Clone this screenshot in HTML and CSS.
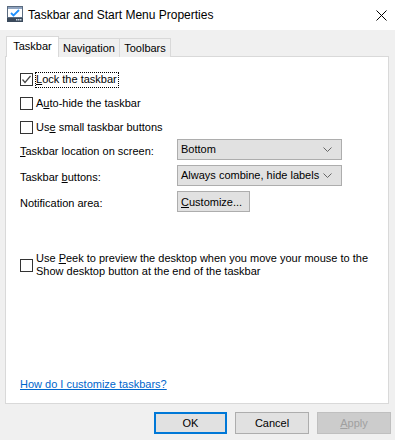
FILE: index.html
```html
<!DOCTYPE html>
<html lang="en">
<head>
    <meta charset="UTF-8">
    <title>Taskbar and Start Menu Properties</title>
    <link rel="stylesheet" href="styles.css">
</head>
<body>

    <div class="window">
        <div class="titlebar">
            <svg class="app-icon" width="16" height="16" viewBox="0 0 16 16">
                <rect x="0.5" y="0.5" width="15" height="11" fill="#ffffff" stroke="#5a6b80"/>
                <rect x="1" y="1" width="14" height="2" fill="#8fa3bf"/>
                <path d="M4 7 L6.5 9.5 L12 4" fill="none" stroke="#1e90ff" stroke-width="1.8"/>
                <rect x="0" y="12" width="16" height="4" fill="#3b4a5c"/>
                <rect x="9" y="13" width="1.5" height="1.5" fill="#c9d3de"/>
                <rect x="11" y="13" width="1.5" height="1.5" fill="#c9d3de"/>
                <rect x="13" y="13" width="1.5" height="1.5" fill="#c9d3de"/>
            </svg>
            <span class="title">Taskbar and Start Menu Properties</span>
            <svg class="close" width="11" height="11" viewBox="0 0 11 11">
                <path d="M0.5 0.5 L10.5 10.5 M10.5 0.5 L0.5 10.5" stroke="#000" stroke-width="1"/>
            </svg>
        </div>

        <div class="body">
            <div class="tabs">
                <div class="tab active">Taskbar</div>
                <div class="tab nav">Navigation</div>
                <div class="tab tools">Toolbars</div>
            </div>

            <div class="panel">
                <div class="checks">
                    <label class="check">
                        <span class="box">
                            <svg width="11" height="11" viewBox="0 0 11 11"><path d="M1.5 5.5 L4 8.5 L9.5 2" fill="none" stroke="#444" stroke-width="1.2"/></svg>
                        </span>
                        <span class="focus"><u>L</u>ock the taskbar</span>
                    </label>
                    <label class="check">
                        <span class="box"></span>
                        <span>A<u>u</u>to-hide the taskbar</span>
                    </label>
                    <label class="check">
                        <span class="box"></span>
                        <span>Us<u>e</u> small taskbar buttons</span>
                    </label>
                </div>

                <div class="settings">
                    <span class="label"><u>T</u>askbar location on screen:</span>
                    <div class="combo">
                        <span>Bottom</span>
                        <svg width="9" height="5" viewBox="0 0 9 5"><path d="M0.5 0.5 L4.5 4.5 L8.5 0.5" fill="none" stroke="#666"/></svg>
                    </div>

                    <span class="label">Taskbar <u>b</u>uttons:</span>
                    <div class="combo">
                        <span>Always combine, hide labels</span>
                        <svg width="9" height="5" viewBox="0 0 9 5"><path d="M0.5 0.5 L4.5 4.5 L8.5 0.5" fill="none" stroke="#666"/></svg>
                    </div>

                    <span class="label">Notification area:</span>
                    <div><button class="btn small"><u>C</u>ustomize...</button></div>
                </div>

                <label class="check peek">
                    <span class="box"></span>
                    <span>Use <u>P</u>eek to preview the desktop when you move your mouse to the Show desktop button at the end of the taskbar</span>
                </label>

                <a href="#" class="help">How do I customize taskbars?</a>
            </div>

            <div class="actions">
                <button class="btn default">OK</button>
                <button class="btn">Cancel</button>
                <button class="btn disabled"><u>A</u>pply</button>
            </div>
        </div>
    </div>

</body>
</html>
```

FILE: styles.css
```css
* {
    box-sizing: border-box;
}

body {
    margin: 0;
    padding: 0;
    font-family: 'Liberation Sans', Arial, sans-serif;
    font-size: 11px;
    line-height: 13px;
    color: #000;
    background: #f0f0f0;
}

.window {
    width: 395px;
    height: 440px;
    display: flex;
    flex-direction: column;
    overflow: hidden;
}

.titlebar {
    height: 30px;
    background: #fff;
    display: flex;
    align-items: center;
    padding-left: 7px;
    padding-right: 8px;
    flex-shrink: 0;
}

.app-icon {
    margin-top: -2px;
}

.title {
    margin-left: 5px;
    font-size: 12px;
    flex: 1;
}

.body {
    flex: 1;
    padding: 6px 6px 0 5px;
    display: flex;
    flex-direction: column;
}

.tabs {
    display: flex;
    align-items: flex-end;
    height: 21px;
    margin-left: 1px;
    margin-bottom: -1px;
    position: relative;
    z-index: 1;
}

.tab {
    height: 19px;
    border: 1px solid #d9d9d9;
    border-bottom: none;
    background: #f0f0f0;
    display: flex;
    align-items: center;
    justify-content: center;
    padding-top: 1px;
}

.tab.active {
    width: 53px;
    height: 21px;
    background: #fff;
    align-items: flex-start;
    padding-top: 3px;
}

.tab.nav {
    width: 61px;
    border-left: none;
}

.tab.tools {
    width: 51px;
    border-left: none;
}

.panel {
    height: 348px;
    background: #fff;
    border: 1px solid #d9d9d9;
    padding: 15px 14px 0 14px;
    display: flex;
    flex-direction: column;
    flex-shrink: 0;
}

.checks {
    display: flex;
    flex-direction: column;
    gap: 9px;
}

.check {
    display: flex;
    align-items: center;
    gap: 3px;
    height: 15px;
}

.box {
    width: 13px;
    height: 13px;
    border: 1px solid #333;
    background: #fff;
    flex-shrink: 0;
    display: flex;
}

.focus {
    outline: 1px dotted #000;
    padding: 0 1px 1px 0;
}

.settings {
    margin-top: 4px;
    display: grid;
    grid-template-columns: 157px 165px;
    row-gap: 5px;
    align-items: center;
}

.label {
    padding-top: 3px;
}

.combo {
    height: 21px;
    border: 1px solid #adadad;
    background: #e1e1e1;
    display: flex;
    align-items: center;
    justify-content: space-between;
    padding: 0 9px 0 3px;
    white-space: nowrap;
}

.btn {
    font-family: inherit;
    font-size: 11px;
    color: #000;
    height: 22px;
    width: 74px;
    border: 1px solid #adadad;
    background: #e1e1e1;
    padding: 0;
    margin: 0;
}

.btn.small {
    width: 73px;
    height: 21px;
    text-align: left;
    padding-left: 3px;
}

.btn.default {
    width: 73px;
    border: 2px solid #0078d7;
}

.btn.disabled {
    color: #a0a0a0;
    background: #cccccc;
    border-color: #bfbfbf;
}

.peek {
    margin-top: 40px;
    height: auto;
}

.help {
    margin-top: auto;
    margin-bottom: 11px;
    color: #0066cc;
    line-height: 15px;
}

.actions {
    display: flex;
    justify-content: flex-end;
    gap: 8px;
    padding-top: 8px;
    margin-right: -2px;
}
```
